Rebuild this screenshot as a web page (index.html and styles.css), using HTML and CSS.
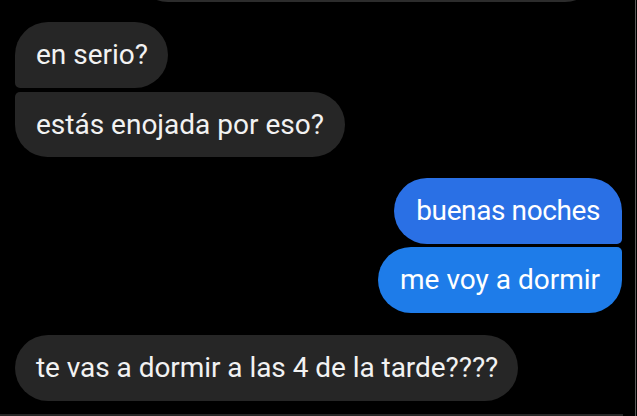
FILE: index.html
```html
<!DOCTYPE html>
<html lang="es">
<head>
<meta charset="utf-8">
<link rel="stylesheet" href="styles.css">
</head>
<body>
<div class="screen">
  <div class="chat">
    <div class="prev-bubble"></div>
    <div class="group group-in">
      <div class="bubble in first">en serio?</div>
      <div class="bubble in last">estás enojada por eso?</div>
    </div>
    <div class="group group-out">
      <div class="bubble out first out-top">buenas noches</div>
      <div class="bubble out last out-bottom">me voy a dormir</div>
    </div>
    <div class="group group-in group-late">
      <div class="bubble in single">te vas a dormir a las 4 de la tarde????</div>
    </div>
  </div>
  <div class="next-bubble"></div>
</div>
</body>
</html>
```

FILE: styles.css
```css
html, body {
  margin: 0;
  padding: 0;
  background: #000;
}

.screen {
  box-sizing: border-box;
  width: 636px;
  height: 416px;
  overflow: hidden;
  border-right: 1px solid #5a5a5a;
  display: flex;
  flex-direction: column;
  justify-content: space-between;
}

.chat {
  display: flex;
  flex-direction: column;
  gap: 20px;
  padding: 0 13px 0 15px;
  font-family: Roboto, "Noto Sans", sans-serif;
  font-size: 28px;
}

.prev-bubble {
  height: 66px;
  margin-top: -64px;
  margin-left: 120px;
  margin-right: 24px;
  background: #2c2c2c;
  border-radius: 33px;
}

.group {
  display: flex;
  flex-direction: column;
  gap: 4px;
}

.group-in { align-items: flex-start; }
.group-out { align-items: flex-end; gap: 3px; margin-top: 1px; }
.group-late { margin-top: 2px; }

.bubble {
  box-sizing: border-box;
  height: 66px;
  line-height: 34px;
  padding: 16px 21px;
  border-radius: 33px;
  color: #f2f2f2;
  white-space: nowrap;
}

.bubble.in {
  background: #262626;
}

.bubble.in.first { border-bottom-left-radius: 5px; padding-right: 20px; }
.bubble.in.last { border-top-left-radius: 5px; height: 65px; }
.bubble.in.single { letter-spacing: -0.05px; padding-right: 20px; }

.bubble.out { padding: 16px 22px; color: #fff; }
.bubble.out.first { border-bottom-right-radius: 5px; }
.bubble.out.last { border-top-right-radius: 5px; }

.out-top { background: #2a70e5; letter-spacing: -0.4px; }
.out-bottom { background: #1e7ce9; }

.next-bubble {
  height: 2px;
  margin: 0 12px 0 0;
  background: #262626;
}
```
